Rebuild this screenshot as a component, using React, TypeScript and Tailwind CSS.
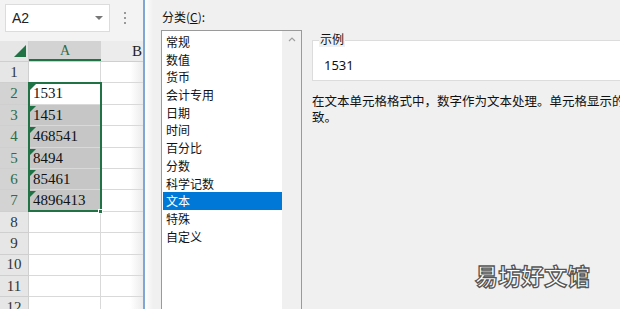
import React from "react";

const rows = [
  { n: 1, v: "" },
  { n: 2, v: "1531" },
  { n: 3, v: "1451" },
  { n: 4, v: "468541" },
  { n: 5, v: "8494" },
  { n: 6, v: "85461" },
  { n: 7, v: "4896413" },
  { n: 8, v: "" },
  { n: 9, v: "" },
  { n: 10, v: "" },
  { n: 11, v: "" },
  { n: 12, v: "" },
];

const cats = ["常规", "数值", "货币", "会计专用", "日期", "时间", "百分比", "分数", "科学记数", "文本", "特殊", "自定义"];

function Tri() {
  return (
    <svg className="absolute left-[1px] top-[1px]" width="6" height="6" viewBox="0 0 6 6">
      <polygon points="0,0 6,0 0,6" fill="#1e7145" />
    </svg>
  );
}

export default function App() {
  return (
    <div className="w-[620px] h-[309px] overflow-hidden flex bg-[#f0f0f0]" style={{ fontFamily: "'Noto Sans CJK SC', sans-serif" }}>
      {/* Excel panel */}
      <div className="w-[143px] shrink-0 flex flex-col bg-white">
        <div className="h-[41px] shrink-0 bg-[#f3f3f3] flex items-start">
          <div className="mt-[4px] ml-[5px] w-[105px] h-[28px] bg-white border border-[#dcdcdc] flex items-center justify-between pl-[6px] pr-[6px]">
            <span className="text-[14px] text-[#222]" style={{ fontFamily: "'Liberation Sans', sans-serif" }}>A2</span>
            <svg width="8" height="5" viewBox="0 0 8 5"><polygon points="0,0 8,0 4,4" fill="#777" /></svg>
          </div>
          <div className="ml-[14px] mt-[12px] flex flex-col gap-[3px]">
            <div className="w-[2px] h-[2px] bg-[#999]" />
            <div className="w-[2px] h-[2px] bg-[#999]" />
            <div className="w-[2px] h-[2px] bg-[#999]" />
          </div>
        </div>
        <div className="h-[21px] shrink-0 flex bg-[#e6e6e6] border-b border-[#cfcfcf]" style={{ fontFamily: "'Liberation Serif', serif" }}>
          <div className="w-[29px] shrink-0 relative border-r border-[#cfcfcf]">
            <svg className="absolute left-[14px] top-[4px]" width="12" height="12" viewBox="0 0 12 12"><polygon points="12,0 12,12 0,12" fill="#217346" /></svg>
          </div>
          <div className="w-[72px] shrink-0 bg-[#d3d3d3] border-b-2 border-[#217346] flex items-center justify-center text-[14px] text-[#2e6b47]">A</div>
          <div className="flex-1 flex items-center justify-end pr-[1px] text-[15px] text-[#222] bg-[#ececec]">B</div>
        </div>
        <div className="relative flex-1" style={{ fontFamily: "'Liberation Serif', serif" }}>
          {rows.map((r) => {
            const sel = r.n >= 2 && r.n <= 7;
            return (
              <div key={r.n} className="h-[21.4px] flex">
                <div className={`w-[29px] shrink-0 flex items-center justify-center text-[15px] border-b border-r border-[#cfcfcf] ${sel ? "bg-[#d3d3d3] text-[#2e6b47]" : "bg-[#e6e6e6] text-[#333]"}`}>{r.n}</div>
                <div className={`w-[72px] shrink-0 relative flex items-center pl-[4px] text-[15px] text-[#111] border-b border-r border-[#d9d9d9] ${sel && r.n > 2 ? "bg-[#c6c6c6]" : "bg-white"}`}>
                  {sel && <Tri />}
                  {r.v}
                </div>
                <div className="flex-1 border-b border-[#d9d9d9] bg-gradient-to-r from-white from-70% to-[#ececec]" />
              </div>
            );
          })}
          <div className="absolute left-[28px] top-[20.4px] w-[74px] h-[129.4px] border-2 border-[#217346] pointer-events-none" />
          <div className="absolute left-[98px] top-[146.5px] w-[5px] h-[5px] bg-[#217346] border border-white" />
        </div>
      </div>
      <div className="w-[2px] shrink-0 bg-[#7ea7d8]" />
      <div className="w-[8px] shrink-0 bg-gradient-to-r from-white to-[#f0f0f0]" />
      {/* Dialog */}
      <div className="flex-1 min-w-0 flex pl-[8px] pt-[9px]">
        <div className="w-[141px] shrink-0 flex flex-col">
          <div className="text-[12px] leading-[16px] text-[#111] pl-[1px]">分类(<span className="underline">C</span>):</div>
          <div className="mt-[5px] flex-1 flex border border-[#9a9a9a] border-b-0 bg-white">
            <div className="w-[120px] pl-[1px] pt-[2px] flex flex-col">
              {cats.map((c) => (
                <div key={c} className={`h-[17.7px] leading-[17.7px] text-[12px] pl-[3px] ${c === "文本" ? "bg-[#0078d7] text-white" : "text-[#111]"}`}>{c}</div>
              ))}
            </div>
            <div className="flex-1 bg-[#f0f0f0] flex justify-center pt-[6px]">
              <svg width="8" height="5" viewBox="0 0 8 5"><polyline points="1,4 4,1 7,4" fill="none" stroke="#a0a0a0" strokeWidth="1.2" /></svg>
            </div>
          </div>
        </div>
        <div className="flex-1 min-w-0 ml-[10px] flex flex-col pt-[31px] overflow-hidden">
          <div className="relative h-[41px] shrink-0 border border-[#dcdcdc] border-r-0 bg-white">
            <span className="absolute left-[6px] top-[-10px] px-[1px] text-[12px] leading-[16px] bg-[#f0f0f0] text-[#111]">示例</span>
            <div className="pt-[16px] pl-[11px] text-[13px] leading-[16px] text-[#111]" style={{ fontFamily: "'Noto Sans', sans-serif" }}>1531</div>
          </div>
          <div className="mt-[12px] text-[12.5px] leading-[16px] text-[#111] whitespace-nowrap">在文本单元格格式中，数字作为文本处理。单元格显示的</div>
          <div className="text-[12.5px] leading-[16px] text-[#111]">致。</div>
          <div className="mt-auto mb-[21px] self-end mr-[30px] text-[23px] leading-[26px] font-bold text-white whitespace-nowrap [-webkit-text-stroke:1.3px_#555]">易坊好文馆</div>
        </div>
      </div>
    </div>
  );
}
